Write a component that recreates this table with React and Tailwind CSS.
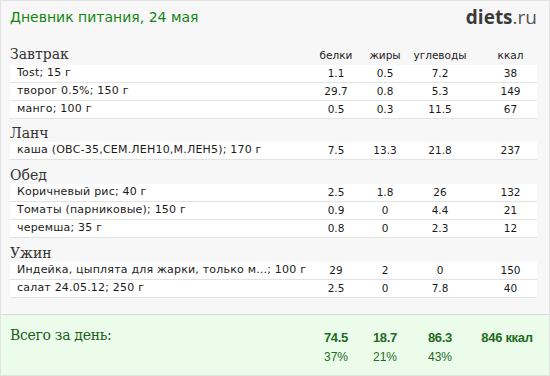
import React from 'react';

const groups = [
  {
    title: 'Завтрак',
    rows: [
      ['Tost; 15 г', '1.1', '0.5', '7.2', '38'],
      ['творог 0.5%; 150 г', '29.7', '0.8', '5.3', '149'],
      ['манго; 100 г', '0.5', '0.3', '11.5', '67'],
    ],
  },
  {
    title: 'Ланч',
    head: 'h-[23px]',
    rows: [['каша (ОВС-35,СЕМ.ЛЕН10,М.ЛЕН5); 170 г', '7.5', '13.3', '21.8', '237']],
  },
  {
    title: 'Обед',
    head: 'h-[24px]',
    rows: [
      ['Коричневый рис; 40 г', '2.5', '1.8', '26', '132'],
      ['Томаты (парниковые); 150 г', '0.9', '0', '4.4', '21'],
      ['черемша; 35 г', '0.8', '0', '2.3', '12'],
    ],
  },
  {
    title: 'Ужин',
    head: 'h-[24px]',
    rows: [
      ['Индейка, цыплята для жарки, только м...; 100 г', '29', '2', '0', '150'],
      ['салат 24.05.12; 250 г', '2.5', '0', '7.8', '40'],
    ],
  },
];

const sans = { fontFamily: '"DejaVu Sans", Verdana, sans-serif' };
const serif = { fontFamily: '"DejaVu Serif", Georgia, serif' };
const arial = { fontFamily: '"Liberation Sans", Arial, sans-serif' };

const Cells = ({ vals }) => (
  <>
    <div className="w-[52px] shrink-0 text-center">{vals[0]}</div>
    <div className="w-[46px] shrink-0 text-center">{vals[1]}</div>
    <div className="w-[64px] shrink-0 text-center">{vals[2]}</div>
    <div className="w-[65px] shrink-0 pl-[12px] text-center">{vals[3]}</div>
  </>
);

export default function App() {
  return (
    <div className="w-[550px] h-[376px] flex flex-col border border-[#e2e2e2] bg-[#f7f7f7] overflow-hidden">
      {/* Header */}
      <div className="flex justify-between items-start pt-[6px] pl-[9px] pr-[12px] h-[26px]">
        <div className="text-[14px] leading-[20px] text-[#148514]" style={sans}>
          Дневник питания, 24 мая
        </div>
        <div className="text-[19px] leading-[20px] text-[#3a3a3a]" style={{ fontFamily: '"Open Sans", sans-serif' }}>
          <span className="font-bold">diets</span>
          <span className="text-[#555]">.ru</span>
        </div>
      </div>

      {/* Meals */}
      <div className="pl-[9px] pr-[12px]">
        {groups.map((g, gi) => (
          <div key={g.title}>
            <div className={`flex items-end ${gi === 0 ? 'h-[38px] pb-[2px]' : `${g.head} pb-[1px]`}`}>
              <div className="flex items-baseline w-full">
                <div className="flex-1 text-[14px] leading-[16px] text-[#333]" style={serif}>
                  {g.title}
                </div>
                {gi === 0 && (
                  <div className="flex text-[10.5px] leading-[16px] text-[#222]" style={sans}>
                    <Cells vals={['белки', 'жиры', 'углеводы', 'ккал']} />
                  </div>
                )}
              </div>
            </div>
            {g.rows.map((r) => (
              <div
                key={r[0]}
                className="flex items-center h-[18px] bg-white border-b border-[#e3e3e3] text-[10.5px] text-[#1a1a1a]"
                style={sans}
              >
                <div className="flex-1 min-w-0 pl-[7px] whitespace-nowrap text-[11px] tracking-[0.2px]">{r[0]}</div>
                <Cells vals={r.slice(1)} />
              </div>
            ))}
          </div>
        ))}
      </div>

      {/* Totals */}
      <div className="mt-auto h-[61px] border-t border-[#dadada] bg-[#ebfdea] pl-[9px] pr-[12px] flex">
        <div className="flex-1 pt-[12px] text-[14px] leading-[16px] tracking-[-0.3px] text-[#1b5e1b]" style={serif}>
          Всего за день:
        </div>
        <div className="flex pt-[15px] text-[#1f6b1f]" style={arial}>
          {[
            ['74.5', '37%', 'w-[52px]'],
            ['18.7', '21%', 'w-[46px]'],
            ['86.3', '43%', 'w-[64px]'],
            ['846 ккал', '', 'w-[65px] pl-[5px]'],
          ].map(([v, p, w]) => (
            <div key={v} className={`${w} shrink-0 text-center`}>
              <div className="text-[13px] leading-[16px] font-bold tracking-[-0.3px]">{v}</div>
              <div className="text-[12px] leading-[22px]">{p}</div>
            </div>
          ))}
        </div>
      </div>
    </div>
  );
}
